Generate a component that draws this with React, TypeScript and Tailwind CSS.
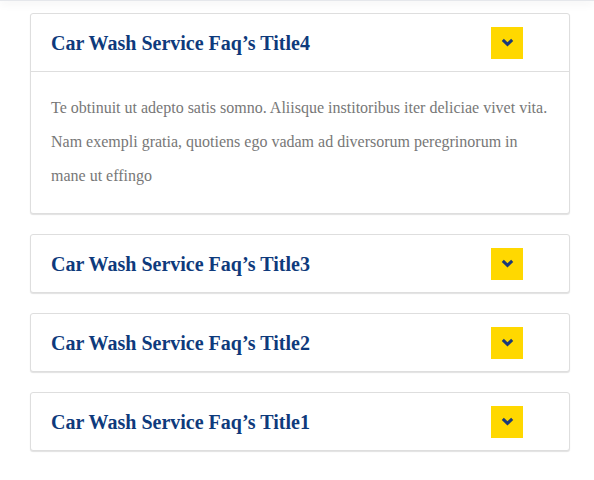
import { useState } from "react";

const faqs = [
  {
    id: 4,
    title: "Car Wash Service Faq’s Title4",
    body: "Te obtinuit ut adepto satis somno. Aliisque institoribus iter deliciae vivet vita. Nam exempli gratia, quotiens ego vadam ad diversorum peregrinorum in mane ut effingo",
  },
  { id: 3, title: "Car Wash Service Faq’s Title3", body: "Te obtinuit ut adepto satis somno." },
  { id: 2, title: "Car Wash Service Faq’s Title2", body: "Te obtinuit ut adepto satis somno." },
  { id: 1, title: "Car Wash Service Faq’s Title1", body: "Te obtinuit ut adepto satis somno." },
];

function Chevron() {
  return (
    <svg width="13" height="9" viewBox="0 0 13 9" aria-hidden="true">
      <path d="M1.8 1.8 L6.5 6.3 L11.2 1.8" fill="none" stroke="#1b3a7a" strokeWidth="3" />
    </svg>
  );
}

export default function App() {
  const [open, setOpen] = useState<number | null>(4);

  return (
    <div className="min-h-screen bg-white font-['Liberation_Serif',serif]">
      {/* shadow of the bar above */}
      <div className="h-px bg-gray-200 shadow-[0_1px_8px_rgba(0,0,0,0.25)]" />

      <div className="flex flex-col gap-5 pl-[30px] pr-[24px] pt-3">
        {faqs.map((faq) => {
          const isOpen = open === faq.id;
          return (
            <div
              key={faq.id}
              className="rounded-[3px] border border-[#dedede] bg-white shadow-[0_1px_1px_rgba(0,0,0,0.12)]"
            >
              <button
                type="button"
                onClick={() => setOpen(isOpen ? null : faq.id)}
                className="flex h-[57px] w-full items-center justify-between pl-5 pr-[46px] text-left"
              >
                <span className="text-[20px] font-bold text-[#0e3a7c]">{faq.title}</span>
                <span className="flex h-8 w-8 items-center justify-center bg-[#ffd800]">
                  <Chevron />
                </span>
              </button>
              {isOpen && (
                <div className="border-t border-[#dedede] px-5 pt-[19px] pb-5">
                  <p className="text-[16px] leading-[34px] text-[#777]">{faq.body}</p>
                </div>
              )}
            </div>
          );
        })}
      </div>
    </div>
  );
}
